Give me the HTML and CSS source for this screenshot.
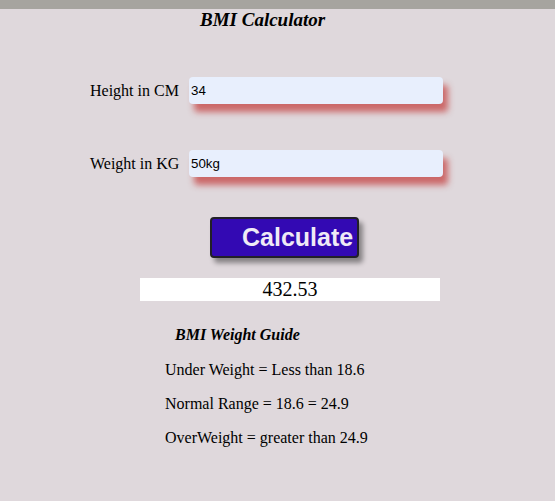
FILE: index.html
```html
<!DOCTYPE html>
<html>
<head>
<meta charset="utf-8">
<link rel="stylesheet" href="styles.css">
</head>
<body>
<div class="topbar"></div>
<h3 class="title">BMI Calculator</h3>
<div class="form">
  <div class="row">
    <label class="label">Height in CM</label>
    <input class="field" type="text" value="34">
  </div>
  <div class="row">
    <label class="label">Weight in KG</label>
    <input class="field" type="text" value="50kg">
  </div>
</div>
<div class="btnwrap">
  <button class="calc">Calculate</button>
</div>
<div class="result">432.53</div>
<div class="guide">
  <h4 class="guide-title">BMI Weight Guide</h4>
  <p class="guide-line">Under Weight = Less than 18.6</p>
  <p class="guide-line">Normal Range = 18.6 = 24.9</p>
  <p class="guide-line">OverWeight = greater than 24.9</p>
</div>
</body>
</html>
```
FILE: styles.css
```css
html, body {
  margin: 0;
  padding: 0;
}
body {
  background: #dfd8dc;
  font-family: "Liberation Serif", "Times New Roman", serif;
  color: #000;
  width: 555px;
  height: 501px;
  overflow: hidden;
}
.topbar {
  height: 9px;
  background: #a6a49f;
}
.title {
  margin: 0 0 0 200px;
  font-size: 19px;
  line-height: 22px;
  font-weight: bold;
  font-style: italic;
}
.form {
  margin-top: 46px;
  display: flex;
  flex-direction: column;
  gap: 46px;
  padding-left: 90px;
}
.row {
  display: flex;
  align-items: center;
  gap: 9px;
}
.label {
  font-size: 16px;
  width: 90px;
  white-space: nowrap;
}
.field {
  box-sizing: border-box;
  width: 254px;
  height: 27px;
  border: none;
  border-radius: 4px;
  background: #e8effd;
  padding: 1px 2px;
  font-family: "Liberation Sans", Arial, sans-serif;
  font-size: 13.33px;
  color: #000;
  box-shadow: 5px 8px 6px rgba(200, 85, 85, 0.85);
  outline: none;
}
.btnwrap {
  margin-top: 40px;
  padding-left: 210px;
  display: flex;
}
.calc {
  box-sizing: border-box;
  height: 41px;
  padding: 0 4px 0 30px;
  border: 2px solid #222028;
  border-radius: 4px;
  background: #3309b3;
  color: #efeaf6;
  font-family: "Liberation Sans", Arial, sans-serif;
  font-weight: bold;
  font-size: 25px;
  box-shadow: 4px 5px 5px rgba(0, 0, 0, 0.4);
}
.result {
  margin: 20px 0 0 140px;
  width: 300px;
  height: 23px;
  line-height: 23px;
  background: #fff;
  text-align: center;
  font-size: 20px;
}
.guide {
  margin-top: 24px;
  padding-left: 165px;
}
.guide-title {
  margin: 0 0 17px 10px;
  font-size: 16px;
  font-weight: bold;
  font-style: italic;
  line-height: 19px;
}
.guide-line {
  margin: 0 0 16px 0;
  font-size: 16px;
  line-height: 18px;
}
```
